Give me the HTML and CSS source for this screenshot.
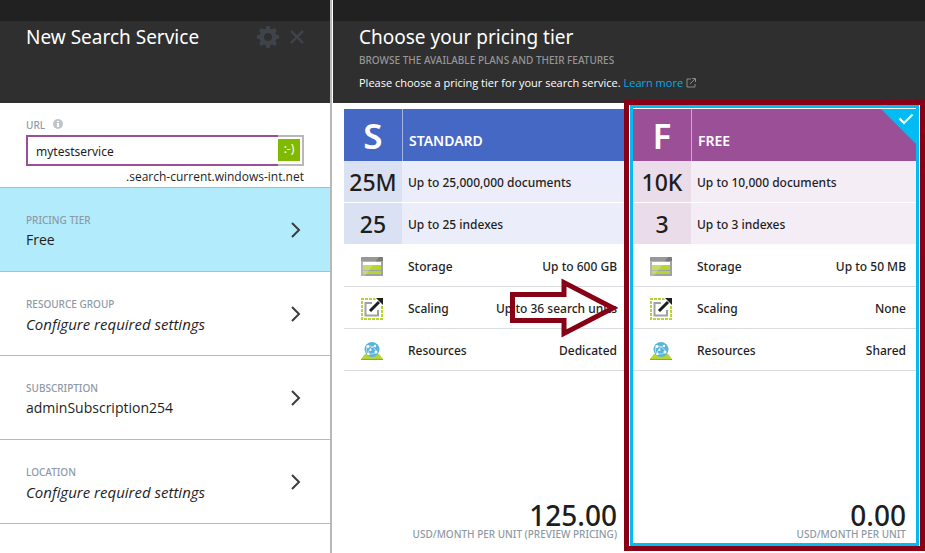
FILE: index.html
```html
<!DOCTYPE html>
<html lang="en">
<head>
<meta charset="utf-8">
<title>New Search Service</title>
<link rel="stylesheet" href="styles.css">
</head>
<body>
<svg class="symbols" aria-hidden="true">
  <symbol id="chevron" viewBox="0 0 10 16"><path d="M1 1l7 7-7 7" fill="none" stroke="#3c3c3c" stroke-width="2"/></symbol>
  <symbol id="storage" viewBox="0 0 22 19">
    <path fill="#a0a1a2" d="M0 1q0-1 1-1h20q1 0 1 1v18H0z"/>
    <path fill="#7a7a7a" d="M1 0h20q1 0 1 1v3H0V1q0-1 1-1z"/>
    <path fill="#fff" d="M2 5h18v3H2z"/>
    <path fill="#b8d432" d="M2 8h18v5H2zM2 14h18v3H2z"/>
    <path fill="#fff" opacity=".22" d="M0 0h18L4 19H0z"/>
  </symbol>
  <symbol id="scaling" viewBox="0 0 22 22">
    <rect x="1" y="1" width="20" height="20" fill="none" stroke="#b8d432" stroke-width="2" stroke-dasharray="3 1" stroke-dashoffset="1"/>
    <path d="M11 5H4.500v12.500H17V12" fill="none" stroke="#a0a1a2" stroke-width="2"/>
    <path fill="#fff" d="M14 0h8v8h-4z"/>
    <path d="M9 13l9-9" stroke="#1e1e1e" stroke-width="3"/>
    <path fill="#1e1e1e" d="M15 0h7v7z"/>
  </symbol>
  <symbol id="resources" viewBox="0 0 22 18">
    <path fill="#b8d432" d="M4 12h14l4 5H0z"/>
    <path fill="#91a82a" d="M0 17h22v1H0z"/>
    <circle cx="11" cy="7.500" r="7.500" fill="#59b4d9"/>
    <path d="M6 4q6-1 10 6M7 13q0-7 8-10M6 4q-2 5 1 9M7 12q5 1 9-2" fill="none" stroke="#fff" stroke-width=".8" opacity=".7"/>
    <g fill="#fff"><circle cx="7" cy="4.500" r="1.500"/><circle cx="14" cy="4" r="1.200"/><circle cx="9.500" cy="8" r="1"/><circle cx="15" cy="10" r="1.500"/><circle cx="7.500" cy="12" r="1.200"/></g>
  </symbol>
</svg>
<div class="page">
  <section class="blade settings">
    <header class="blade-head">
      <div class="title-row">
        <h1>New Search Service</h1>
        <button class="tool" type="button" aria-label="Settings">
          <svg width="22" height="22" viewBox="-11 -11 22 22"><g fill="#3f444a"><path fill-rule="evenodd" d="M0-8.500A8.500 8.500 0 1 1 0 8.500 8.500 8.500 0 1 1 0-8.500zM0-4A4 4 0 1 0 0 4 4 4 0 1 0 0-4z"/><path id="tooth" d="M-2.500-7.500L-1.700-11h3.400L2.500-7.500z"/><use href="#tooth" transform="rotate(45)"/><use href="#tooth" transform="rotate(90)"/><use href="#tooth" transform="rotate(135)"/><use href="#tooth" transform="rotate(180)"/><use href="#tooth" transform="rotate(225)"/><use href="#tooth" transform="rotate(270)"/><use href="#tooth" transform="rotate(315)"/></g></svg>
        </button>
        <button class="tool" type="button" aria-label="Close">
          <svg width="14" height="14" viewBox="0 0 14 14"><path d="M1 1l12 12M13 1L1 13" stroke="#3f444a" stroke-width="2.400"/></svg>
        </button>
      </div>
    </header>
    <div class="url-field">
      <div class="url-label">
        <label class="caption" for="url">URL</label>
        <svg width="10" height="10" viewBox="0 0 10 10" aria-hidden="true"><circle cx="5" cy="5" r="5" fill="#c0c5ca"/><path fill="#fff" d="M4 2h2v1H4zM4 4h2v4H4z"/></svg>
      </div>
      <div class="url-box">
        <input id="url" type="text" value="mytestservice">
        <span class="url-status"><span class="smile">:-)</span></span>
      </div>
      <div class="suffix">.search-current.windows-int.net</div>
    </div>
    <button class="option selected" type="button">
      <span class="option-text"><span class="caption">PRICING TIER</span><span class="value">Free</span></span>
      <svg width="10" height="16"><use href="#chevron"/></svg>
    </button>
    <button class="option" type="button">
      <span class="option-text"><span class="caption">RESOURCE GROUP</span><span class="value pending">Configure required settings</span></span>
      <svg width="10" height="16"><use href="#chevron"/></svg>
    </button>
    <button class="option" type="button">
      <span class="option-text"><span class="caption">SUBSCRIPTION</span><span class="value">adminSubscription254</span></span>
      <svg width="10" height="16"><use href="#chevron"/></svg>
    </button>
    <button class="option" type="button">
      <span class="option-text"><span class="caption">LOCATION</span><span class="value pending">Configure required settings</span></span>
      <svg width="10" height="16"><use href="#chevron"/></svg>
    </button>
  </section>

  <section class="blade pricing">
    <header class="blade-head">
      <h1>Choose your pricing tier</h1>
      <p class="subtitle caption">BROWSE THE AVAILABLE PLANS AND THEIR FEATURES</p>
      <p class="intro">Please choose a pricing tier for your search service. <a href="#learn">Learn more
        <svg width="10" height="10" viewBox="0 0 10 10" aria-hidden="true"><path d="M5 1H1v8h8V6M4 6l5-5M6 .500h3.500V4" fill="none" stroke="#8a8a8a"/></svg></a></p>
    </header>
    <div class="tiers">
      <article class="tier standard">
        <h2 class="tier-head"><span class="key">S</span><span class="name">STANDARD</span></h2>
        <div class="quota"><span class="key">25M</span><span class="text">Up to 25,000,000 documents</span></div>
        <div class="quota"><span class="key">25</span><span class="text">Up to 25 indexes</span></div>
        <div class="feature"><span class="icon"><svg width="22" height="19"><use href="#storage"/></svg></span><span class="text">Storage</span><span class="amount">Up to 600 GB</span></div>
        <div class="feature"><span class="icon"><svg width="22" height="22"><use href="#scaling"/></svg></span><span class="text">Scaling</span><span class="amount">Up to 36 search units</span>
          <svg class="arrow" width="108" height="60" viewBox="0 0 108 60" aria-hidden="true"><path d="M2.500 16.500H54V4.500L103 30 54 55.500V42.500H2.500z" fill="none" stroke="#870016" stroke-width="5"/></svg>
        </div>
        <div class="feature"><span class="icon"><svg width="22" height="18"><use href="#resources"/></svg></span><span class="text">Resources</span><span class="amount">Dedicated</span></div>
        <div class="price"><span class="cost">125.00</span><span class="unit caption">USD/MONTH PER UNIT (PREVIEW PRICING)</span></div>
      </article>
      <article class="tier free chosen">
        <h2 class="tier-head"><span class="key">F</span><span class="name">FREE</span></h2>
        <svg class="check" width="35" height="35" viewBox="0 0 35 35" aria-hidden="true"><path fill="#00bcf2" d="M0 0h35v35z"/><path d="M18.500 9.500l4.500 4.500 8.500-8.500" fill="none" stroke="#fff" stroke-width="2.200"/></svg>
        <div class="quota"><span class="key">10K</span><span class="text">Up to 10,000 documents</span></div>
        <div class="quota"><span class="key">3</span><span class="text">Up to 3 indexes</span></div>
        <div class="feature"><span class="icon"><svg width="22" height="19"><use href="#storage"/></svg></span><span class="text">Storage</span><span class="amount">Up to 50 MB</span></div>
        <div class="feature"><span class="icon"><svg width="22" height="22"><use href="#scaling"/></svg></span><span class="text">Scaling</span><span class="amount">None</span></div>
        <div class="feature"><span class="icon"><svg width="22" height="18"><use href="#resources"/></svg></span><span class="text">Resources</span><span class="amount">Shared</span></div>
        <div class="price"><span class="cost">0.00</span><span class="unit caption">USD/MONTH PER UNIT</span></div>
        <span class="frame"></span>
      </article>
    </div>
  </section>
</div>
</body>
</html>
```
FILE: styles.css
```css
* { box-sizing: border-box; }
body {
  margin: 0;
  background: #fff;
  color: #1e1e1e;
  font: 12px/16px "Noto Sans", "Open Sans", sans-serif;
}
h1, h2, p { margin: 0; font-weight: 400; }
button { font: inherit; color: inherit; border: 0; background: none; padding: 0; text-align: left; }
svg { flex: none; }
.symbols { position: absolute; width: 0; height: 0; }

.page { display: grid; grid-template-columns: 332px minmax(0, 1fr); min-height: 100vh; }
.blade { display: flex; flex-direction: column; }
.settings { border-right: 2px solid #b8b8b8; }
.pricing { margin-left: 1px; }

.blade-head {
  height: 103px;
  padding: 0 26px;
  border-top: 21px solid #212121;
  background: #2f2f2f;
  color: #fff;
}
h1 { font-size: 19px; line-height: 32px; }
.title-row { display: flex; align-items: center; gap: 11px; }
.title-row h1 { flex: 1; }
.tool { display: flex; }
.caption { font-size: 10px; font-weight: 500; color: #8d9aa5; }
.subtitle { line-height: 14px; color: #969696; }
.intro { margin-top: 8px; font-family: "Open Sans", sans-serif; font-size: 11px; font-weight: 500; }
.intro a { color: #00abec; text-decoration: none; }
.intro svg { vertical-align: -1px; }

.url-field { height: 85px; padding: 14px 26px 0; border-bottom: 1px solid #b8b8b8; }
.url-label { display: flex; gap: 8px; height: 18px; }
.url-label svg { margin-top: 2px; }
.url-box { display: flex; height: 31px; }
.url-box input {
  flex: 1;
  min-width: 0;
  padding: 2px 8px 0;
  border: 2px solid #9b4f96;
  border-right: 0;
  outline: 0;
  font: inherit;
  color: inherit;
}
.url-status { border: 2px solid #b8b8b8; border-left: 0; padding: 2px 2px 2px 0; }
.smile { display: block; width: 22px; height: 22px; background: #7fba00; color: #fff; font-size: 12px; line-height: 20px; text-align: center; }
.suffix { margin-top: 3px; text-align: right; font-family: "Open Sans", sans-serif; }

.option {
  display: flex;
  align-items: center;
  height: 84px;
  padding: 0 29px 0 26px;
  border-bottom: 1px solid #b8b8b8;
}
.option.selected { background: #b2ebfb; }
.option-text { flex: 1; display: flex; flex-direction: column; padding-top: 4px; }
.value { font-family: "Open Sans", sans-serif; font-size: 14px; line-height: 24px; }
.pending { font-size: 15px; font-style: italic; }

.tiers { flex: 1; display: grid; grid-template-columns: 1fr 1fr; padding: 2px 6px 7px 8px; }
.tier { position: relative; display: flex; flex-direction: column; min-width: 0; border: 3px solid transparent; padding-top: 1px; }
.chosen { border-color: #00bcf2; }
.key { width: 58px; flex: none; text-align: center; }
.tier-head { display: flex; height: 52px; color: #fff; font-weight: 600; }
.tier-head .key { font-size: 35px; line-height: 54px; }
.name { flex: 1; padding: 22px 6px 0; font-size: 14px; line-height: 20px; border-left: 1px solid rgba(255, 255, 255, .5); }
.quota, .feature { position: relative; display: flex; height: 42px; line-height: 43px; border-bottom: 1px solid #fff; font-weight: 500; }
.quota .key { font-size: 23px; }
.text { flex: 1; padding-left: 6px; }
.standard .tier-head { background: #4668c5; }
.standard .quota { background: #ebeefa; }
.standard .quota .key { background: #dae1f3; }
.free .tier-head { background: #9b4f96; }
.free .quota { background: #f5edf5; }
.free .quota .key { background: #ebdcea; }
.feature { border-color: #d9dce0; }
.feature .icon { width: 56px; margin-right: 2px; display: flex; align-items: center; justify-content: center; padding-top: 2px; }
.amount { padding-right: 10px; }
.price { margin-top: auto; padding: 0 10px 3px; display: flex; flex-direction: column; text-align: right; }
.cost { font-size: 28px; line-height: 26px; font-weight: 500; }
.unit { line-height: 12px; }
.check { position: absolute; top: 1px; right: 0; }
.arrow { position: absolute; top: -9px; right: 9px; z-index: 2; }
.frame { position: absolute; inset: -8px -9px; border: 5px solid #870016; pointer-events: none; }
```
